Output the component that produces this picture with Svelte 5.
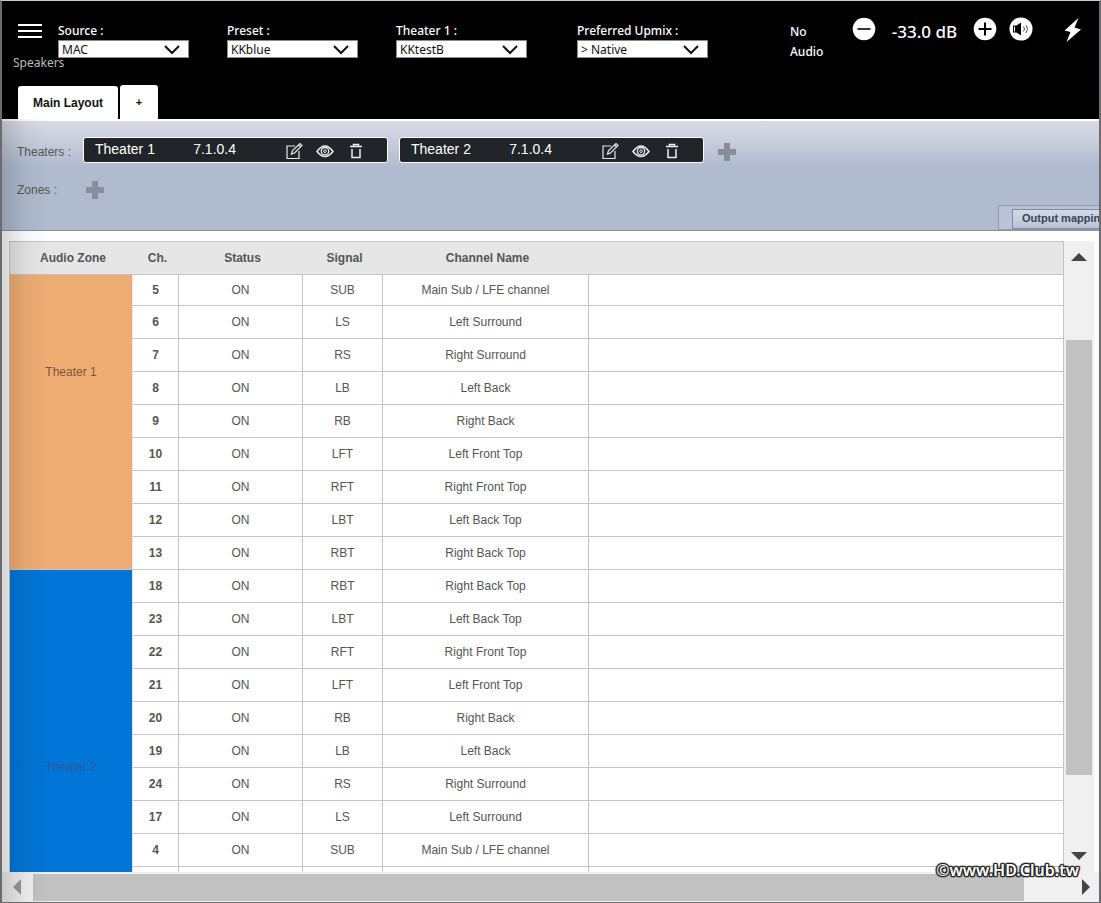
<script>
    const selects = [
        { id: 'source', label: 'Source :', value: 'MAC' },
        { id: 'preset', label: 'Preset :', value: 'KKblue' },
        { id: 'theater', label: 'Theater 1 :', value: 'KKtestB' },
        { id: 'upmix', label: 'Preferred Upmix :', value: '> Native' },
    ];

    const theaters = [
        { name: 'Theater 1', layout: '7.1.0.4' },
        { name: 'Theater 2', layout: '7.1.0.4' },
    ];

    const zones = [
        {
            name: 'Theater 1',
            css: 'orange',
            rows: [
                [5, 'SUB', 'Main Sub / LFE channel'],
                [6, 'LS', 'Left Surround'],
                [7, 'RS', 'Right Surround'],
                [8, 'LB', 'Left Back'],
                [9, 'RB', 'Right Back'],
                [10, 'LFT', 'Left Front Top'],
                [11, 'RFT', 'Right Front Top'],
                [12, 'LBT', 'Left Back Top'],
                [13, 'RBT', 'Right Back Top'],
            ],
        },
        {
            name: 'Theater 2',
            css: 'blue',
            rows: [
                [18, 'RBT', 'Right Back Top'],
                [23, 'LBT', 'Left Back Top'],
                [22, 'RFT', 'Right Front Top'],
                [21, 'LFT', 'Left Front Top'],
                [20, 'RB', 'Right Back'],
                [19, 'LB', 'Left Back'],
                [24, 'RS', 'Right Surround'],
                [17, 'LS', 'Left Surround'],
                [4, 'SUB', 'Main Sub / LFE channel'],
                ['', '', ''],
            ],
        },
    ];
</script>

{#snippet cross()}
    <svg width="20" height="20" viewBox="0 0 20 20"><path d="M7 1h6v6h6v6h-6v6H7v-6H1V7h6z" fill="#878d99" /></svg>
{/snippet}

<div class="frame">
    <header>
        <div class="topbar">
            <button class="burger" aria-label="Menu">
                <svg width="24" height="14" viewBox="0 0 24 14"><path d="M0 1h24M0 7h24M0 13h24" stroke="#fff" stroke-width="2" /></svg>
            </button>
            {#each selects as s}
                <div class="field {s.id}">
                    <label for={s.id}>{s.label}</label>
                    <div class="select">
                        <select id={s.id}><option>{s.value}</option></select>
                        <svg width="16" height="10" viewBox="0 0 16 10"><path d="M1 1l7 7 7-7" fill="none" stroke="#111" stroke-width="2" /></svg>
                    </div>
                </div>
            {/each}
            <div class="volume">
                <span class="noaudio">No<br />Audio</span>
                <button aria-label="Volume down">
                    <svg width="24" height="24" viewBox="0 0 24 24"><circle cx="12" cy="12" r="11.3" fill="#fff" /><path d="M5.5 12h13" stroke="#000" stroke-width="1.6" /></svg>
                </button>
                <span class="db">-33.0 dB</span>
                <button aria-label="Volume up">
                    <svg width="24" height="24" viewBox="0 0 24 24"><circle cx="12" cy="12" r="11.3" fill="#fff" /><path d="M5.5 12h13M12 5.5v13" stroke="#000" stroke-width="2" /></svg>
                </button>
                <button class="mute" aria-label="Mute">
                    <svg width="24" height="24" viewBox="0 0 24 24">
                        <circle cx="12" cy="12" r="11.5" fill="#fff" />
                        <path d="M4 8.500h3.500L12 5.500v13l-4.500-3H4z" fill="#000" />
                        <path d="M5.500 9.500v5" stroke="#fff" />
                        <path d="M14.500 9.500q2 2.500 0 5M17 8q3 4 0 8" fill="none" stroke="#555" />
                    </svg>
                </button>
                <button aria-label="Power">
                    <svg width="18" height="26" viewBox="0 0 18 26"><path d="M14.500 1L.5 13.500l6 1.500L2.500 25 17 12.500l-6.500-2z" fill="#fff" /></svg>
                </button>
            </div>
        </div>
        <div class="crumb">Speakers</div>
        <nav>
            <button class="tab">Main Layout</button>
            <button class="tab add">+</button>
        </nav>
    </header>

    <div class="body">
        <section class="panel">
            <div class="line">
                <span class="caption">Theaters :</span>
                {#each theaters as t}
                    <div class="chip">
                        <span class="name">{t.name}</span>
                        <span class="layout">{t.layout}</span>
                        <button aria-label="Edit">
                            <svg width="18" height="18" viewBox="0 0 18 18"><path d="M10 4H2v12.500h12V9M6.500 12l1-3.500L15 1.500l2 2L9.500 11zM13.500 3l2 2" fill="none" stroke="#e8e8e8" stroke-width="1.2" /></svg>
                        </button>
                        <button aria-label="Show">
                            <svg width="18" height="18" viewBox="0 0 18 18">
                                <path d="M1 9.500Q9-1.500 17 9.500 9 19.500 1 9.500z" fill="none" stroke="#eee" stroke-width="1.5" />
                                <circle cx="9" cy="9.2" r="3.7" fill="none" stroke="#eee" stroke-width="1.3" />
                                <circle cx="9" cy="9.2" r="1.3" fill="none" stroke="#eee" />
                            </svg>
                        </button>
                        <button aria-label="Delete">
                            <svg width="18" height="18" viewBox="0 0 18 18"><path d="M3 4.500h12M6.500 4V2.500h5V4M5 7v8.500h8V7" fill="none" stroke="#eee" stroke-width="1.5" /></svg>
                        </button>
                    </div>
                {/each}
                <button class="plus" aria-label="Add theater">{@render cross()}</button>
            </div>
            <div class="line">
                <span class="caption">Zones :</span>
                <button class="plus" aria-label="Add zone">{@render cross()}</button>
            </div>
            <div class="mapping"><button>Output mapping</button></div>
        </section>

        <div class="content">
            <div class="grid">
                <table>
                    <colgroup>
                        <col class="c-zone" /><col class="c-ch" /><col class="c-status" /><col class="c-signal" /><col class="c-name" /><col />
                    </colgroup>
                    <thead>
                        <tr><th>Audio Zone</th><th>Ch.</th><th>Status</th><th>Signal</th><th>Channel Name</th><th></th></tr>
                    </thead>
                    {#each zones as zone}
                        <tbody class={zone.css}>
                            {#each zone.rows as [ch, signal, name], i}
                                <tr>
                                    {#if i === 0}
                                        <td class="zone" rowspan={zone.rows.length}>{zone.name}</td>
                                    {/if}
                                    <td class="ch">{ch}</td>
                                    <td>{ch ? 'ON' : ''}</td>
                                    <td>{signal}</td>
                                    <td>{name}</td>
                                    <td></td>
                                </tr>
                            {/each}
                        </tbody>
                    {/each}
                </table>
            </div>
            <div class="vbar">
                <svg width="16" height="8" viewBox="0 0 16 8"><path d="M8 0l8 8H0z" fill="#444" /></svg>
                <div class="track"><div class="thumb"></div></div>
                <svg width="16" height="8" viewBox="0 0 16 8"><path d="M0 0h16L8 8z" fill="#444" /></svg>
            </div>
        </div>

        <div class="hbar">
            <svg width="8" height="16" viewBox="0 0 8 16"><path d="M8 0v16L0 8z" fill="#999" /></svg>
            <div class="track"><div class="thumb"></div></div>
            <svg width="8" height="16" viewBox="0 0 8 16"><path d="M0 0l8 8-8 8z" fill="#444" /></svg>
        </div>
        <div class="shade"></div>
    </div>
    <div class="mark">©www.HD.Club.tw</div>
</div>

<style>
    .frame, .frame * {
        box-sizing: border-box;
    }

    .frame {
        position: relative;
        display: flex;
        flex-direction: column;
        height: 100vh;
        overflow: hidden;
        border: 2px solid #6c6c6e;
        border-top: 1px solid #c8cccb;
        border-bottom-width: 1px;
        background: #fff;
        color: #555;
        font: 12px "Liberation Sans", Arial, sans-serif;
    }

    button {
        padding: 0;
        border: none;
        background: none;
        color: inherit;
        font: inherit;
    }

    svg {
        display: block;
        flex: none;
    }

    header {
        display: flex;
        flex-direction: column;
        flex: none;
        height: 118px;
        background: #000;
        color: #fff;
        font-family: "Noto Sans", sans-serif;
    }

    .topbar {
        display: flex;
        flex: none;
        height: 57px;
        padding: 16px 17px 0 16px;
    }

    .burger {
        flex: none;
        width: 40px;
        height: 28px;
    }

    .field {
        flex: none;
        width: 131px;
        margin-right: 38px;
        padding-top: 5px;
    }

    .theater {
        margin-right: 50px;
    }

    .upmix {
        margin-right: 0;
    }

    label {
        display: block;
        line-height: 18px;
        font-weight: 500;
    }

    .select {
        position: relative;
    }

    .select svg {
        position: absolute;
        top: 5px;
        right: 9px;
        pointer-events: none;
    }

    select {
        display: block;
        appearance: none;
        width: 100%;
        height: 18px;
        padding: 0 3px;
        border: 1px solid #8a8a8a;
        border-radius: 0;
        background: #fff;
        color: #111;
        font: 12px "Noto Sans", sans-serif;
    }

    .volume {
        display: flex;
        flex: none;
        align-items: flex-start;
        margin-left: auto;
    }

    .noaudio {
        width: 62px;
        padding-top: 5px;
        line-height: 20px;
        font-weight: 500;
    }

    .db {
        width: 97px;
        line-height: 30px;
        text-align: center;
        font-size: 17px;
        font-weight: 500;
    }

    .mute {
        margin: 0 31px 0 12px;
    }

    .crumb {
        padding-left: 11px;
        line-height: 10px;
        color: #bbb;
    }

    nav {
        display: flex;
        align-items: flex-end;
        gap: 2px;
        margin-top: auto;
        padding-left: 16px;
    }

    .tab {
        width: 100px;
        height: 33px;
        border-radius: 3px 3px 0 0;
        background: #fff;
        color: #111;
        font: bold 12px "Liberation Sans", Arial, sans-serif;
    }

    .add {
        width: 38px;
        height: 34px;
        font-size: 11px;
    }

    .body {
        position: relative;
        display: flex;
        flex: 1;
        flex-direction: column;
        min-height: 0;
    }

    .shade {
        position: absolute;
        top: 0;
        bottom: 0;
        left: 0;
        width: 48px;
        background: linear-gradient(to right, rgba(0, 0, 0, .16), rgba(0, 0, 0, .04) 50%, transparent);
        pointer-events: none;
    }

    .panel {
        position: relative;
        flex: none;
        height: 112px;
        padding: 12px 0 0 15px;
        border-top: 2px solid #fff;
        border-bottom: 1px solid #8791a5;
        background: linear-gradient(#d9dce6, #b0bbcf 46px);
    }

    .line {
        display: flex;
        align-items: center;
        height: 38px;
    }

    .caption {
        width: 66px;
    }

    .chip {
        display: flex;
        align-items: center;
        width: 305px;
        height: 26px;
        margin: 0 11px 4px 0;
        padding: 0 21px 2px 11px;
        border: 1px solid #fff;
        border-radius: 3px;
        background: #212529;
        color: #fff;
        font-size: 14px;
        line-height: 22px;
    }

    .name {
        width: 99px;
    }

    .layout {
        width: 81px;
    }

    .chip button {
        width: 31px;
        padding: 3px 0 0 12px;
    }

    .plus {
        margin-left: 2px;
    }

    .mapping {
        position: absolute;
        right: 0;
        bottom: 0;
        width: 101px;
        height: 25px;
        padding: 3px 0 0 13px;
        overflow: hidden;
        border: 1px solid #929db2;
        border-right: none;
        background: #b9c3d6;
    }

    .mapping button {
        width: 110px;
        height: 20px;
        padding: 0 0 2px 9px;
        border: 1px solid #7f8aa1;
        background: linear-gradient(#d3d9e6, #bac4d6);
        color: #38435c;
        font-size: 11px;
        font-weight: bold;
        text-align: left;
    }

    .content {
        display: flex;
        flex: 1;
        min-height: 0;
        padding: 10px 5px 0 7px;
    }

    .grid {
        flex: 1;
        min-width: 0;
        overflow: hidden;
        border-left: 1px solid #c4c4c4;
    }

    table {
        width: 100%;
        table-layout: fixed;
        border-spacing: 0;
        text-align: center;
    }

    .c-zone { width: 123px; }
    .c-ch { width: 46px; }
    .c-status { width: 124px; }
    .c-signal { width: 80px; }
    .c-name { width: 206px; }

    th {
        height: 34px;
        padding: 0 0 0 3px;
        border-top: 1px solid #c4c4c4;
        border-bottom: 1px solid #c4c4c4;
        background: #e6e6e6;
    }

    th:last-child {
        border-right: 1px solid #c4c4c4;
    }

    td {
        height: 33px;
        padding: 0;
        border-right: 1px solid #c4c4c4;
        border-bottom: 1px solid #c4c4c4;
    }

    .orange tr:first-child td {
        height: 31px;
    }

    .ch {
        font-weight: bold;
    }

    td.zone {
        vertical-align: top;
        border-right: 1px solid #e6e6e6;
    }

    .orange .zone {
        padding-top: 90px;
        background: #f0ad73;
        background-clip: padding-box;
        color: #7a5738;
    }

    .blue .zone {
        padding-top: 190px;
        background: #0275d8;
        background-clip: padding-box;
        color: #2b5c96;
    }

    .vbar {
        display: flex;
        flex: none;
        flex-direction: column;
        align-items: center;
        width: 30px;
        padding: 12px 0;
        background: #f0f0f0;
    }

    .vbar .track {
        display: flex;
        flex: 1;
        flex-direction: column;
        width: 26px;
        padding-top: 79px;
    }

    .vbar .thumb {
        height: 85%;
        background: #c1c1c1;
    }

    .hbar {
        display: flex;
        flex: none;
        align-items: center;
        height: 30px;
        padding: 0 9px 0 11px;
        background: #f0f0f0;
    }

    .hbar .track {
        flex: 1;
        padding: 0 6px 0 12px;
    }

    .hbar .thumb {
        width: 95%;
        height: 27px;
        background: #c1c1c1;
    }

    .mark {
        position: absolute;
        right: 20px;
        bottom: 20px;
        color: #fff;
        font: 600 16px/24px "Noto Sans", sans-serif;
        text-shadow: 1px 0 1px #222, -1px 0 1px #222, 0 1px 1px #222, 0 -1px 1px #222, 1px 1px 1px #222, -1px -1px 1px #222, 1px -1px 1px #222, -1px 1px 1px #222, 0 0 2px #222;
    }
</style>
